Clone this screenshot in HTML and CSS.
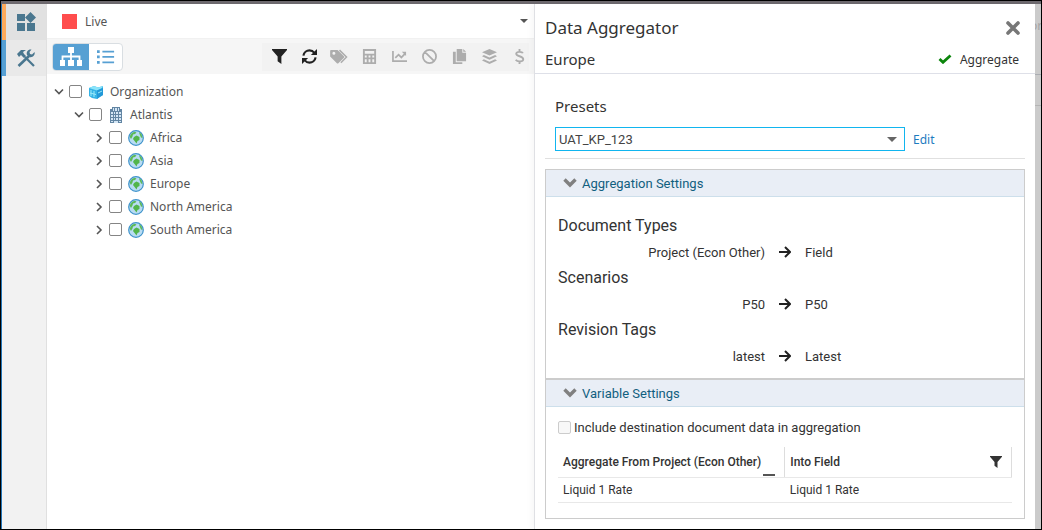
FILE: index.html
```html
<!DOCTYPE html>
<html lang="en">
<head>
<meta charset="utf-8">
<title>Data Aggregator</title>
<link rel="stylesheet" href="styles.css">
</head>
<body>
<svg class="defs" aria-hidden="true">
  <symbol id="filter" viewBox="0 0 16 16"><path d="M0 0h16v1L10 8v8L6 13V8L0 1z"/></symbol>
  <symbol id="arrow" viewBox="0 0 12 12"><path d="M0 6h10.500M6 1l5 5-5 5" fill="none" stroke="currentColor" stroke-width="2"/></symbol>
  <symbol id="chev" viewBox="0 0 14 10"><path d="M1.500 1.500L7 7l5.500-5.500" fill="none" stroke="currentColor" stroke-width="3.400"/></symbol>
  <symbol id="thin" viewBox="0 0 10 10"><path d="M1 2.500l4 4 4-4" fill="none" stroke="currentColor" stroke-width="1.600"/></symbol>
  <symbol id="thin-right" viewBox="0 0 10 10"><path d="M3 1l4 4-4 4" fill="none" stroke="currentColor" stroke-width="1.600"/></symbol>
  <symbol id="globe" viewBox="0 0 16 16"><circle cx="8" cy="8" r="7.300" fill="#b9dcf3" stroke="#3f93cb" stroke-width="1.200"/><path d="M1.800 7c0-2 2-4.500 5-5.200L8.500 2.500 7 4 5 4.500 4.500 6.500 3 9zM11 2l2.500 2 1 4-1.500-.5L11.500 4z" fill="#5cba55"/><path d="M6 7l2.500-1.500L11.500 7v3l-2 1-1 2.500-1.500-2L5 9z" fill="#52b54a"/></symbol>
</svg>
<div class="app">
  <nav class="rail" aria-label="Sections">
    <button class="rail-item apps" aria-label="Modules"><svg viewBox="0 0 18 18"><path d="M0 1h8v7H0zM0 10h8v8H0zM10 10h8v8h-8zM13.500-1L19 4.500 13.500 10 8 4.500z"/></svg></button>
    <button class="rail-item tools" aria-label="Tools"><svg viewBox="0 0 18 18"><path d="M0 5l4-4 5 0-3 2 1 2 2 2-2 2-3-3-2 2z"/><path d="M8 8l9 9" stroke="currentColor" stroke-width="2.200"/><path d="M1.500 17L12 7" stroke="currentColor" stroke-width="2.600"/><path d="M10 6c-1-3 1-6 4.500-5.500L12.500 3l.5 2 2 .5L17.500 3c1 3-2 6-5 5z"/></svg></button>
  </nav>
  <main class="explorer">
    <button class="mode"><span class="swatch"></span><span>Live</span><span class="caret"></span></button>
    <div class="toolbar">
      <div class="views">
        <button class="view active" aria-label="Tree view"><svg viewBox="0 0 24 20"><path d="M9 0h6v6H9zM1 13h5v6H1zM9 13h6v6H9zM18 13h5v6h-5z"/><path d="M12 5v9M3.500 14V9.500h17V14" fill="none" stroke="currentColor" stroke-width="1.800"/></svg></button>
        <button class="view" aria-label="List view"><svg viewBox="0 0 20 16"><path d="M0 1h3v3H0zM0 7h3v3H0zM0 13h3v3H0zM6 1.500h13v2H6zM6 7.500h13v2H6zM6 13.500h13v2H6z"/></svg></button>
      </div>
      <div class="actions">
        <button class="on" aria-label="Filter"><svg viewBox="0 0 16 16"><use href="#filter"/></svg></button>
        <button class="on" aria-label="Refresh"><svg viewBox="0 0 16 16"><path d="M1.500 7C2 3.500 5 1.500 8 1.500c2 0 4 1 5 2.500M14.500 9c-.5 3.500-3.500 5.500-6.500 5.500-2 0-4-1-5-2.500" fill="none" stroke="currentColor" stroke-width="2.300"/><path d="M16 0v6.500H9.500zM0 16V9.500h6.500z"/></svg></button>
        <button aria-label="Tags"><svg class="wide" viewBox="0 0 20 16"><path fill-rule="evenodd" d="M0 1.500V8l7.500 7.500h1L15 9V8L8 1H1zM4 3a1.600 1.600 0 1 1 0 3.200A1.600 1.600 0 0 1 4 3z"/><path d="M10 1.200l7.500 7.300-6 6.200" fill="none" stroke="currentColor" stroke-width="1.600"/></svg></button>
        <button aria-label="Calculator"><svg viewBox="0 0 16 16"><path fill-rule="evenodd" d="M1 0h14v16H1zM3 2v3h10V2zM3 7v2h2V7zm4 0v2h2V7zm4 0v2h2V7zM3 11v3h2v-3zm4 0v3h2v-3zm4 0v3h2v-3z"/></svg></button>
        <button aria-label="Chart"><svg viewBox="0 0 16 16"><path d="M1 2v11h15M3.500 9.500L7 6l3 3 4-4" fill="none" stroke="currentColor" stroke-width="1.800"/><path d="M10.500 3H15v4.500z"/></svg></button>
        <button aria-label="Disable"><svg viewBox="0 0 16 16"><path d="M3 3l10 10M15 8A7 7 0 1 1 1 8a7 7 0 0 1 14 0z" fill="none" stroke="currentColor" stroke-width="1.900"/></svg></button>
        <button aria-label="Copy"><svg viewBox="0 0 16 16"><path d="M5 0h6v4h4v9H5zM12 0l3 3h-3zM1 3h3v11h7v2H1z"/></svg></button>
        <button aria-label="Layers"><svg viewBox="0 0 16 16"><path d="M8 0l8 3.500L8 7 0 3.500zM2 6.500L8 9l6-2.500 2 1.200L8 11.500 0 7.700zM2 11l6 2.500 6-2.500 2 1.200L8 16l-8-3.800z"/></svg></button>
        <button aria-label="Currency"><svg viewBox="0 0 16 16"><path d="M11.500 4.500C11 3 5 2 4.500 5c0 3.500 7.500 2 7.500 6 0 3-6.500 3-8 .5M8 0v3M8 13v3" fill="none" stroke="currentColor" stroke-width="2"/></svg></button>
      </div>
    </div>
    <ul class="tree">
      <li class="row"><svg class="twist"><use href="#thin"/></svg><input type="checkbox" id="n0"><svg class="node" viewBox="0 0 16 16"><path d="M1 4l5-2 4 1.500L15 2v9l-4 2-2 2-5-1-3-2z" fill="#35b3e6"/><path d="M1 4l5-2 4 1.500L15 2l-1 2-5 2.500z" fill="#8be4fa"/><path d="M9 6.500L15 4v7l-6 4z" fill="#2299d8"/><path d="M3 6v6M6 7v6M2 9l6 1.500M10 9l4-2" stroke="#9ceafa"/></svg><label for="n0">Organization</label></li>
      <li class="row l1"><svg class="twist"><use href="#thin"/></svg><input type="checkbox" id="n1"><svg class="node" viewBox="0 0 16 16"><path d="M4 0h8v2h2v14H2V2h2z" fill="#6285a3"/><path d="M5 1h1v3H5zM7 1h2v3H7zM10 1h1v3h-1zM3 5h2v2H3zM6 5h1v2H6zM8 5h2v2H8zM11 5h2v2h-2zM3 8h2v2H3zM6 8h1v2H6zM8 8h2v2H8zM11 8h2v2h-2zM3 11h2v2H3zM6 11h1v2H6zM8 11h2v2H8zM11 11h2v2h-2zM3 14h2v1H3zM6 14h4v2H6zM11 14h2v1h-2z" fill="#d4e6f5"/></svg><label for="n1">Atlantis</label></li>
      <li class="row l2"><svg class="twist"><use href="#thin-right"/></svg><input type="checkbox" id="n2"><svg class="node"><use href="#globe"/></svg><label for="n2">Africa</label></li>
      <li class="row l2"><svg class="twist"><use href="#thin-right"/></svg><input type="checkbox" id="n3"><svg class="node"><use href="#globe"/></svg><label for="n3">Asia</label></li>
      <li class="row l2"><svg class="twist"><use href="#thin-right"/></svg><input type="checkbox" id="n4"><svg class="node"><use href="#globe"/></svg><label for="n4">Europe</label></li>
      <li class="row l2"><svg class="twist"><use href="#thin-right"/></svg><input type="checkbox" id="n5"><svg class="node"><use href="#globe"/></svg><label for="n5">North America</label></li>
      <li class="row l2"><svg class="twist"><use href="#thin-right"/></svg><input type="checkbox" id="n6"><svg class="node"><use href="#globe"/></svg><label for="n6">South America</label></li>
    </ul>
  </main>
  <aside class="drawer">
    <header class="head">
      <div class="line"><h1>Data Aggregator</h1><button class="close" aria-label="Close"><svg viewBox="0 0 14 14"><path d="M2 2l10 10M12 2L2 12" stroke="currentColor" stroke-width="3.600" stroke-linecap="round"/></svg></button></div>
      <div class="line second"><h2>Europe</h2><button class="run"><svg viewBox="0 0 14 10"><path d="M1.500 5l3.500 3.300L12.500 1.500" fill="none" stroke="#0b850b" stroke-width="2.800"/></svg>Aggregate</button></div>
    </header>
    <section class="presets">
      <label for="preset">Presets</label>
      <div class="pick"><div class="combo"><select id="preset"><option>UAT_KP_123</option></select></div><a href="#edit">Edit</a></div>
    </section>
    <section class="panel">
      <button class="bar"><svg><use href="#chev"/></svg>Aggregation Settings</button>
      <div class="maps">
        <h3>Document Types</h3>
        <div class="map"><span class="from">Project (Econ Other)</span><svg><use href="#arrow"/></svg><span>Field</span></div>
        <h3>Scenarios</h3>
        <div class="map"><span class="from">P50</span><svg><use href="#arrow"/></svg><span>P50</span></div>
        <h3>Revision Tags</h3>
        <div class="map"><span class="from">latest</span><svg><use href="#arrow"/></svg><span>Latest</span></div>
      </div>
    </section>
    <section class="panel">
      <button class="bar"><svg><use href="#chev"/></svg>Variable Settings</button>
      <div class="vars">
        <div class="include"><input type="checkbox" id="inc" disabled><label for="inc">Include destination document data in aggregation</label></div>
        <table>
          <thead><tr><th><div class="cell">Aggregate From Project (Econ Other)<span class="dash"></span></div></th><th><div class="cell">Into Field<svg viewBox="0 0 16 16"><use href="#filter"/></svg></div></th></tr></thead>
          <tbody><tr><td>Liquid 1 Rate</td><td>Liquid 1 Rate</td></tr></tbody>
        </table>
      </div>
    </section>
  </aside>
  <div class="scrim"><span>or</span><i></i></div>
</div>
</body>
</html>
```
FILE: styles.css
```css
* { box-sizing: border-box; }
body { margin: 0; font-family: "Noto Sans", sans-serif; font-size: 12px; color: #444; }
button { font: inherit; color: inherit; border: 0; background: none; padding: 0; margin: 0; }
h1, h2, h3 { margin: 0; font-weight: 400; }
svg { display: block; fill: currentColor; flex: none; }
.defs { display: none; }
.app { display: flex; min-height: 100vh; border: 1px solid #000; box-shadow: inset 0 3px #6d696e; padding-top: 3px; background: #fff; }

.rail { flex: none; width: 46px; background: #f2f2f2; border-left: 1px solid #2476b8; border-right: 1px solid #e0e0e0; }
.rail-item { display: flex; align-items: center; justify-content: center; width: 100%; height: 36px; color: #4a778f; background: #e9e9e9; border-left: 4px solid #57a0d3; }
.rail-item.apps { background: #e1e1e1; border-left-color: #fdaa5c; }
.rail-item svg { width: 18px; height: 18px; overflow: visible; }

.explorer { flex: 488 1 0; min-width: 0; }
.mode { display: flex; align-items: center; gap: 8px; width: 100%; height: 34px; padding: 0 6px 0 15px; color: #555; }
.swatch { width: 15px; height: 15px; background: #ff4d4d; }
.caret { margin-left: auto; border: 4px solid transparent; border-top-color: #555; border-bottom: 0; }
.toolbar { display: flex; justify-content: space-between; align-items: center; height: 36px; padding: 0 5px; background: #f6f6f6; border-top: 1px solid #f1f1f1; }
.views { display: flex; height: 28px; border: 1px solid #d9dee2; border-radius: 4px; overflow: hidden; background: #fff; }
.view { display: flex; align-items: center; justify-content: center; width: 33px; color: #57a0d3; }
.view.active { width: 36px; background: #57a0d3; color: #fff; }
.view svg { width: 18px; height: 15px; }
.view.active svg { width: 24px; height: 20px; }
.actions { display: flex; align-items: center; height: 28px; gap: 10px; padding-left: 7px; background: #f2f2f2; color: #adadad; }
.actions button { display: flex; align-items: center; justify-content: center; width: 20px; height: 20px; }
.actions .on { color: #222; }
.actions svg { width: 15px; height: 15px; }
.actions .wide { width: 19px; }
.tree { list-style: none; margin: 0; padding: 6px 0 0 7px; color: #555; }
.row { display: flex; align-items: center; height: 23px; }
.l1 { padding-left: 20px; }
.l2 { padding-left: 40px; }
.twist { width: 10px; height: 10px; margin-right: 5px; }
.node { width: 16px; height: 16px; margin: 0 6px; }
input[type="checkbox"] { appearance: none; flex: none; width: 13px; height: 13px; margin: 0; border: 1px solid #858585; border-radius: 2px; background: #fff; }

.drawer { flex: 501 1 0; min-width: 0; border-left: 1px solid #dfe0e4; box-shadow: -3px 0 6px #00000008; padding-bottom: 10px; color: #333; }
.head { height: 70px; padding: 9px 16px 0 10px; border-bottom: 1px solid #dee0e8; }
.line { display: flex; align-items: center; justify-content: space-between; height: 29px; }
h1 { font-size: 17px; }
h2 { font-size: 15px; }
.close { width: 14px; height: 14px; margin-right: -1px; color: #777; }
.line.second { height: 34px; }
.run { display: flex; align-items: center; gap: 8px; }
.run svg { width: 14px; height: 10px; }
.presets { margin: 0 10px 10px; padding: 21px 10px 7px; border-bottom: 1px solid #e0e0e0; }
.presets > label { display: block; font-size: 15px; line-height: 22px; }
.pick { display: flex; align-items: center; gap: 8px; margin-top: 10px; }
.combo { position: relative; flex: 0 1 350px; }
.combo::after { content: ""; position: absolute; right: 8px; top: 10px; border: 5px solid transparent; border-top-color: #666; border-bottom: 0; pointer-events: none; }
select { display: block; appearance: none; width: 100%; height: 24px; padding: 0 3px; border: 1px solid #11b5ef; border-radius: 0; background: #fff; font: 13px Roboto, sans-serif; color: #444; }
a { color: #1d7bbf; text-decoration: none; }

.panel { margin: 0 10px; border: 1px solid #ccc; font-family: Roboto, sans-serif; font-size: 13px; }
.bar { display: flex; align-items: center; gap: 5px; width: 100%; height: 27px; padding-left: 17px; background: #e9eef6; border-bottom: 1px solid #cddfeb; color: #11607f; }
.bar svg { width: 14px; height: 10px; color: #808080; }
.maps { padding: 16px 12px 9px; }
h3 { font-size: 16px; line-height: 26px; }
.map { display: grid; grid-template-columns: 207px 12px 1fr; column-gap: 14px; align-items: center; height: 26px; }
.from { text-align: right; }
.map svg { width: 12px; height: 12px; color: #222; }
.vars { padding: 12px 12px 15px; }
.include { display: flex; align-items: center; gap: 3px; height: 16px; }
.include input { border-color: #ccc; background: #f8f8f8; }
table { width: 100%; margin-top: 12px; border-collapse: collapse; table-layout: fixed; font-size: 12px; }
th, td { padding: 0 5px; text-align: left; border-bottom: 1px solid #e8e8e8; }
th { height: 30px; font-weight: 500; border-right: 1px solid #ddd; }
td { height: 25px; }
.cell { position: relative; display: flex; align-items: center; justify-content: space-between; height: 29px; }
.cell svg { width: 12px; height: 12px; margin-right: 4px; }
.dash { position: absolute; right: 4px; bottom: 0; width: 12px; height: 2px; background: #555; }

.scrim { flex: none; width: 6px; overflow: hidden; background: #cbcbcb; }
.scrim span { display: block; height: 71px; padding-top: 13px; color: #a5a5a5; border-bottom: 1px solid #aaadb2; text-indent: -5px; }
.scrim i { display: block; height: 31px; border-bottom: 1px solid #b4b4b4; }
```
